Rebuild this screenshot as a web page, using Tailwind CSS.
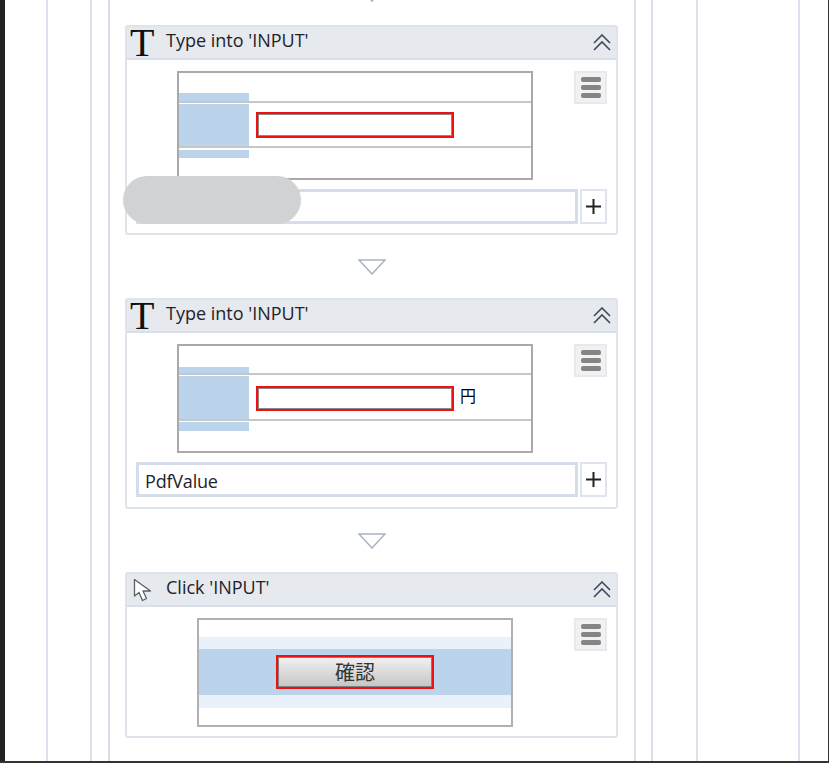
<!DOCTYPE html>
<html lang="ja">
<head>
  <meta charset="UTF-8" />
  <meta name="viewport" content="width=device-width, initial-scale=1.0" />
  <title>Workflow</title>
  <script src="https://cdn.jsdelivr.net/npm/@tailwindcss/browser@4"></script>
</head>
<body class="w-[829px] h-[763px] overflow-hidden bg-white flex flex-col text-[#1f2328] font-['Open_Sans','Noto_Sans_CJK_JP',sans-serif]">

  <div class="flex flex-1 min-h-0">
    <div class="w-[5px] bg-[#222222]"></div>

    <!-- nested column guides -->
    <div class="w-[823px] pl-[41px]">
      <div class="w-[754px] h-full border-x-2 border-[#dbe1ec] pl-[42px]">
        <div class="w-[608px] h-full border-x-2 border-[#dde0ea] pl-[16px]">
          <div class="w-[545px] h-full border-x-2 border-[#d8deea]">
            <div class="w-[526px] h-full border-r-2 border-[#dbe1ec] pl-[15px] flex flex-col">

              <div class="w-[493px] h-[25px] flex justify-center">
                <svg width="28" height="3" viewBox="0 0 28 3"><polygon points="1,-14 27,-14 14,1" fill="#fff" stroke="#a9b3c2" stroke-width="1.5"/></svg>
              </div>

              <!-- Type into 1 -->
              <div class="relative w-[493px] h-[210px] border-2 border-[#dfe3ec] rounded-[3px]">
                <div class="h-[33px] bg-[#e6e9ed] border-b-2 border-[#d8deea] flex items-center pl-[3px] pr-[5px]">
                  <span class="w-[36px] font-['Liberation_Serif',serif] text-[40px] leading-[33px] text-[#111111]">T</span>
                  <span class="text-[18px] leading-[29px] pb-[4px]">Type into 'INPUT'</span>
                  <svg class="ml-auto" width="18" height="17" viewBox="0 0 18 17" fill="none" stroke="#3f4a5a" stroke-width="1.6"><polyline points="1,9 9,1 17,9"/><polyline points="1,16 9,8 17,16"/></svg>
                </div>
                <div class="px-[9px] pt-[11px]">
                  <div class="flex pl-[41px]">
                    <div class="w-[356px] h-[109px] border-2 border-[#a9a9a9]">
                      <div class="h-[30px] pt-[20px] border-b-2 border-[#c6c8c8]">
                        <div class="w-[70px] h-[8px] bg-[#bbd4eb]"></div>
                      </div>
                      <div class="h-[45px] pt-px flex border-b-2 border-[#c6c8c8]">
                        <div class="w-[70px] h-[42px] bg-[#bbd4eb]"></div>
                        <div class="ml-[7px] mt-[8px] w-[198px] h-[26px] border-2 border-[#f01010]">
                          <div class="h-full border border-[#8a8a8a]"></div>
                        </div>
                      </div>
                      <div class="mt-[2px] w-[70px] h-[8px] bg-[#bbd4eb]"></div>
                    </div>
                    <div class="ml-auto w-[33px] h-[33px] bg-[#f1f1f1] border-2 border-[#e6e9f0] flex flex-col items-center justify-center gap-[3px]">
                      <div class="w-[20px] h-[5px] rounded-[2px] bg-[#858585]"></div>
                      <div class="w-[20px] h-[5px] rounded-[2px] bg-[#858585]"></div>
                      <div class="w-[20px] h-[5px] rounded-[2px] bg-[#858585]"></div>
                    </div>
                  </div>
                  <div class="mt-[9px] flex gap-[2px]">
                    <div class="w-[442px] h-[35px] border-[3px] border-[#d5dcea]"></div>
                    <div class="w-[27px] h-[35px] border-2 border-[#dfe4ee] flex items-center justify-center">
                      <svg width="15" height="15" viewBox="0 0 15 15" stroke="#222" stroke-width="2"><path d="M0 7.5H15M7.5 0V15"/></svg>
                    </div>
                  </div>
                </div>
                <!-- redacted value -->
                <div class="absolute left-[-4px] top-[149px] w-[178px] h-[48px] rounded-[24px] bg-[#d1d2d4]"></div>
              </div>

              <div class="w-[493px] h-[63px] pt-[24px] flex justify-center items-start">
                <svg width="28" height="16" viewBox="0 0 28 16"><polygon points="1,1 27,1 14,15" fill="#fff" stroke="#a9b3c2" stroke-width="1.5"/></svg>
              </div>

              <!-- Type into 2 -->
              <div class="w-[493px] h-[211px] border-2 border-[#dfe3ec] rounded-[3px]">
                <div class="h-[33px] bg-[#e6e9ed] border-b-2 border-[#d8deea] flex items-center pl-[3px] pr-[5px]">
                  <span class="w-[36px] font-['Liberation_Serif',serif] text-[40px] leading-[33px] text-[#111111]">T</span>
                  <span class="text-[18px] leading-[29px] pb-[4px]">Type into 'INPUT'</span>
                  <svg class="ml-auto" width="18" height="17" viewBox="0 0 18 17" fill="none" stroke="#3f4a5a" stroke-width="1.6"><polyline points="1,9 9,1 17,9"/><polyline points="1,16 9,8 17,16"/></svg>
                </div>
                <div class="px-[9px] pt-[11px]">
                  <div class="flex pl-[41px]">
                    <div class="w-[356px] h-[109px] border-2 border-[#a9a9a9]">
                      <div class="h-[29px] pt-[21px] border-b-2 border-[#c6c8c8]">
                        <div class="w-[70px] h-[6px] bg-[#bbd4eb]"></div>
                      </div>
                      <div class="h-[46px] pt-px flex border-b-2 border-[#c6c8c8]">
                        <div class="w-[70px] h-[43px] bg-[#bbd4eb]"></div>
                        <div class="ml-[7px] mt-[10px] w-[198px] h-[25px] border-2 border-[#f01010]">
                          <div class="h-full border border-[#8a8a8a]"></div>
                        </div>
                        <span class="ml-[6px] mt-[8px] text-[16px] leading-[22px] font-['Noto_Sans_CJK_JP',sans-serif] text-black">円</span>
                      </div>
                      <div class="mt-px w-[70px] h-[9px] bg-[#bbd4eb]"></div>
                    </div>
                    <div class="ml-auto w-[33px] h-[33px] bg-[#f1f1f1] border-2 border-[#e6e9f0] flex flex-col items-center justify-center gap-[3px]">
                      <div class="w-[20px] h-[5px] rounded-[2px] bg-[#858585]"></div>
                      <div class="w-[20px] h-[5px] rounded-[2px] bg-[#858585]"></div>
                      <div class="w-[20px] h-[5px] rounded-[2px] bg-[#858585]"></div>
                    </div>
                  </div>
                  <div class="mt-[9px] flex gap-[2px]">
                    <div class="w-[442px] h-[35px] border-[3px] border-[#d5dcea] pl-[6px] text-[18px] leading-[32px] tracking-[-0.2px]">PdfValue</div>
                    <div class="w-[27px] h-[35px] border-2 border-[#dfe4ee] flex items-center justify-center">
                      <svg width="15" height="15" viewBox="0 0 15 15" stroke="#222" stroke-width="2"><path d="M0 7.5H15M7.5 0V15"/></svg>
                    </div>
                  </div>
                </div>
              </div>

              <div class="w-[493px] h-[63px] pt-[24px] flex justify-center items-start">
                <svg width="28" height="16" viewBox="0 0 28 16"><polygon points="1,1 27,1 14,15" fill="#fff" stroke="#a9b3c2" stroke-width="1.5"/></svg>
              </div>

              <!-- Click -->
              <div class="w-[493px] h-[166px] border-2 border-[#dfe3ec] rounded-[3px]">
                <div class="h-[33px] bg-[#e6e9ed] border-b-2 border-[#d8deea] flex items-center pl-[6px] pr-[5px]">
                  <span class="w-[33px]">
                    <svg class="block" width="20" height="24" viewBox="0 0 20 24" fill="#fff" stroke="#5a5f66" stroke-width="1.3" stroke-linejoin="round"><path d="M1.5 1.5V18L6 14.5L9.5 22.5L13.5 20.5L10 13H17.5Z"/></svg>
                  </span>
                  <span class="text-[18px] leading-[29px] pb-[4px]">Click 'INPUT'</span>
                  <svg class="ml-auto" width="18" height="17" viewBox="0 0 18 17" fill="none" stroke="#3f4a5a" stroke-width="1.6"><polyline points="1,9 9,1 17,9"/><polyline points="1,16 9,8 17,16"/></svg>
                </div>
                <div class="px-[9px] pt-[11px]">
                  <div class="flex pl-[61px]">
                    <div class="w-[316px] h-[109px] border-2 border-[#b0b0b0] pt-[17px]">
                      <div class="h-[12px] bg-[#e9f2fb]"></div>
                      <div class="h-[46px] bg-[#bbd4eb] flex items-center justify-center">
                        <div class="w-[158px] h-[34px] border-2 border-[#f01010]">
                          <div class="h-full border border-[#808080] bg-linear-to-b from-[#f0f0f0] to-[#c6c6c6] flex items-center justify-center text-[20px] leading-none font-['Noto_Sans_CJK_JP',sans-serif] text-[#333333]">確認</div>
                        </div>
                      </div>
                      <div class="h-[13px] bg-[#e9f2fb]"></div>
                    </div>
                    <div class="ml-auto w-[33px] h-[33px] bg-[#f1f1f1] border-2 border-[#e6e9f0] flex flex-col items-center justify-center gap-[3px]">
                      <div class="w-[20px] h-[5px] rounded-[2px] bg-[#858585]"></div>
                      <div class="w-[20px] h-[5px] rounded-[2px] bg-[#858585]"></div>
                      <div class="w-[20px] h-[5px] rounded-[2px] bg-[#858585]"></div>
                    </div>
                  </div>
                </div>
              </div>

            </div>
          </div>
        </div>
      </div>
    </div>

    <div class="w-px bg-[#333333]"></div>
  </div>

  <div class="h-[2px] bg-[#333333]"></div>
</body>
</html>
